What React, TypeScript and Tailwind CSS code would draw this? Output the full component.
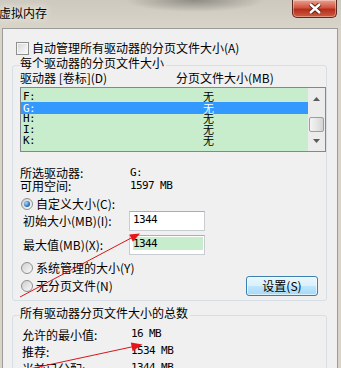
import React from "react";

const cjk = "font-['Noto_Sans_CJK_SC',sans-serif]";
const mono = "font-['DejaVu_Sans_Mono',monospace] text-[11px] tracking-[-0.6px]";

function Radio({ checked }: { checked?: boolean }) {
  return (
    <span className="flex size-[12px] shrink-0 items-center justify-center rounded-full border border-[#8e8f8f] bg-[linear-gradient(135deg,#cfcfcf,#fafafa)]">
      {checked && (
        <span className="size-[6px] rounded-full bg-[radial-gradient(circle_at_35%_35%,#a6dcff,#1d63ad_70%)]" />
      )}
    </span>
  );
}

function Group({
  title,
  className,
  children,
}: {
  title: string;
  className?: string;
  children: React.ReactNode;
}) {
  return (
    <div className={`w-[315px] rounded-[3px] border border-[#d5dfe5] pl-[7px] ${className ?? ""}`}>
      <div className="-mt-[10px] w-fit bg-[#f0f0f0] pr-[2px] leading-[14px]">{title}</div>
      {children}
    </div>
  );
}

function Field({ value, green }: { value: string; green?: boolean }) {
  return (
    <div className="h-[20px] w-[76px] border border-[#c9ccd1] border-t-[#abadb3] bg-white pl-[3px] pr-[1px] pt-[1px]">
      <div className={`h-[13px] leading-[13px] ${mono} ${green ? "bg-[#c7edcc]" : ""}`}>{value}</div>
    </div>
  );
}

const drives = ["F:", "G:", "H:", "I:", "K:"];

export default function App() {
  return (
    <div className={`relative flex h-[368px] w-[341px] flex-col overflow-hidden bg-[#d9d4c7] text-[12px] text-black ${cjk}`}>
      {/* title bar */}
      <div className="flex h-[28px] shrink-0 items-start justify-between bg-[radial-gradient(ellipse_70px_12px_at_195px_0px,#8f8c84,transparent),linear-gradient(#cdc9bf,#d8d4c8)]">
        <span className="-ml-[1px] mt-[6px] leading-[14px] [text-shadow:0_0_6px_#f4f1ea,0_0_10px_#f4f1ea]">虚拟内存</span>
        <div className="mr-[4px] flex h-[18px] w-[45px] items-center justify-center rounded-b-[5px] border border-t-0 border-[#5b2a22] bg-[linear-gradient(#eaa290,#d2543f_45%,#b52e1c_55%,#cf5b40)] shadow-[inset_0_0_0_1px_rgba(255,255,255,0.35)]">
          <svg width="14" height="11" viewBox="0 0 14 11">
            <path d="M2 1 L12 10 M12 1 L2 10" stroke="#4a1a14" strokeWidth="4.2" />
            <path d="M2 1 L12 10 M12 1 L2 10" stroke="#fff" strokeWidth="2.4" />
          </svg>
        </div>
      </div>

      {/* client area */}
      <div className="ml-[2px] mr-[3px] flex-1 border border-b-0 border-[#9c9c9c] bg-[#f0f0f0] pl-[9px] pt-[12px]">
        <div className="ml-[4px] flex h-[14px] items-center gap-[3px]">
          <span className="size-[13px] border border-[#8e8f8f] bg-[linear-gradient(135deg,#d6d6d6,#fdfdfd)] shadow-[inset_0_0_0_1px_#f6f6f6]" />
          <span className="leading-[14px]">自动管理所有驱动器的分页文件大小(A)</span>
        </div>

        <Group title="每个驱动器的分页文件大小" className="mt-[10px] pb-[4px]">
          <div className="mt-[1px] flex leading-[14px]">
            <span className="w-[156px]">驱动器 [卷标](D)</span>
            <span>分页文件大小(MB)</span>
          </div>

          {/* drive list */}
          <div className="mt-[2px] flex h-[65px] w-[306px] border border-[#828790] bg-[#c7edcc]">
            <div className="flex-1 pt-[3px]">
              {drives.map((d) => {
                const sel = d === "G:";
                return (
                  <div
                    key={d}
                    className={`flex items-center leading-[11px] ${sel ? "-mb-[1px] h-[12px] bg-[#3399ff] text-white" : "h-[11px]"}`}
                  >
                    <span className={`w-[182px] pl-[2px] ${mono}`}>{d}</span>
                    <span className="text-[11px]">无</span>
                  </div>
                );
              })}
            </div>
            <div className="flex w-[17px] flex-col items-center bg-[#ececec]">
              <svg className="mt-[9px]" width="7" height="4" viewBox="0 0 7 4">
                <path d="M3.5 0 L7 4 H0Z" fill="#5a5a5a" />
              </svg>
              <div className="mt-[16px] h-[15px] w-[15px] rounded-[2px] border border-[#9d9d9d] bg-[linear-gradient(90deg,#f4f4f4,#e6e6e6_50%,#d4d4d4)]" />
              <svg className="mt-[7px]" width="7" height="4" viewBox="0 0 7 4">
                <path d="M0 0 H7 L3.5 4Z" fill="#5a5a5a" />
              </svg>
            </div>
          </div>

          <div className="mt-[14px] flex leading-[13px]">
            <span className="w-[110px]">所选驱动器:</span>
            <span className={mono}>G:</span>
          </div>
          <div className="flex leading-[13px]">
            <span className="w-[110px]">可用空间:</span>
            <span className={mono}>1597 MB</span>
          </div>

          <div className="mt-[5px] flex h-[14px] items-center gap-[3px] pl-[1px]">
            <Radio checked />
            <span>自定义大小(C):</span>
          </div>
          <div className="flex h-[20px] items-center">
            <span className="w-[109px] pl-[3px]">初始大小(MB)(I):</span>
            <Field value="1344" />
          </div>
          <div className="mt-[4px] flex h-[20px] items-center">
            <span className="w-[109px] pl-[3px]">最大值(MB)(X):</span>
            <Field value="1344" green />
          </div>
          <div className="mt-[6px] flex h-[14px] items-center gap-[3px] pl-[1px]">
            <Radio />
            <span>系统管理的大小(Y)</span>
          </div>
          <div className="mt-[1px] flex h-[20px] items-center justify-between pr-[8px]">
            <div className="flex items-center gap-[3px] pl-[1px]">
              <Radio />
              <span>无分页文件(N)</span>
            </div>
            <button className="flex h-[20px] w-[72px] items-center justify-center rounded-[3px] border border-[#3c7fb1] bg-[linear-gradient(#eaf6fd,#d9f0fc_50%,#bee6fd_51%,#a7d9f5)] shadow-[inset_0_0_0_1px_rgba(255,255,255,0.6)]">
              设置(S)
            </button>
          </div>
        </Group>

        <Group title="所有驱动器分页文件大小的总数" className="mt-[14px] pb-[12px]">
          <div className="ml-[2px] mt-[6px] flex h-[17px] items-center">
            <span className="w-[109px]">允许的最小值:</span>
            <span className={mono}>16 MB</span>
          </div>
          <div className="ml-[2px] flex h-[17px] items-center">
            <span className="w-[109px]">推荐:</span>
            <span className={mono}>1534 MB</span>
          </div>
          <div className="ml-[2px] flex h-[17px] items-center">
            <span className="w-[109px]">当前已分配:</span>
            <span className={mono}>1344 MB</span>
          </div>
        </Group>
      </div>

      {/* red annotation arrows */}
      <svg className="pointer-events-none absolute left-0 top-0" width="341" height="368" viewBox="0 0 341 368">
        <line x1="20" y1="297" x2="134" y2="236.5" stroke="#d4161c" strokeWidth="1" />
        <polygon points="140,233.5 129.3,234.5 132.9,241.7" fill="#e8141a" />
        <line x1="20" y1="371" x2="136" y2="346" stroke="#d4161c" strokeWidth="1" />
        <polygon points="142.5,344.5 130.8,342.4 132.6,351.2" fill="#e8141a" />
      </svg>
    </div>
  );
}
